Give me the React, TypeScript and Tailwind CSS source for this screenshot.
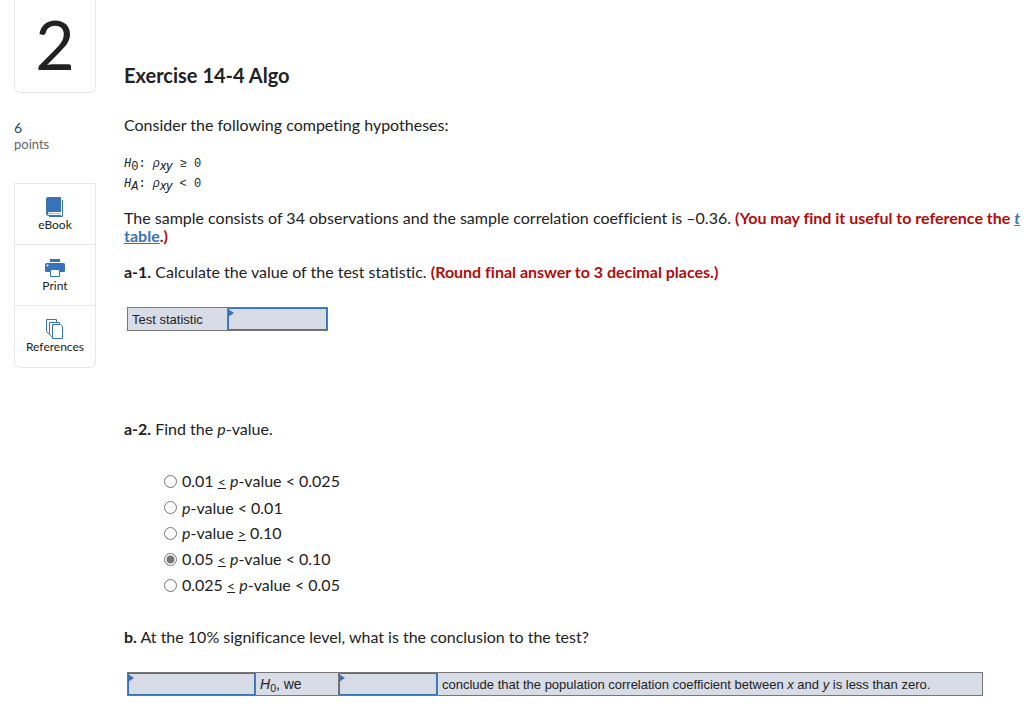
import { useState, type ReactNode } from 'react'

const choices: { id: string; label: ReactNode }[] = [
  { id: 'c1', label: <>0.01 <Rel s="<" /> <i>p</i>-value &lt; 0.025</> },
  { id: 'c2', label: <><i>p</i>-value &lt; 0.01</> },
  { id: 'c3', label: <><i>p</i>-value <Rel s=">" /> 0.10</> },
  { id: 'c4', label: <>0.05 <Rel s="<" /> <i>p</i>-value &lt; 0.10</> },
  { id: 'c5', label: <>0.025 <Rel s="<" /> <i>p</i>-value &lt; 0.05</> },
]

// Underlined < or >, read as "or equal"
function Rel({ s }: { s: string }) {
  return <span className="text-sm underline">{s}</span>
}

function BookIcon() {
  return (
    <svg width="20" height="20" viewBox="0 0 20 20" aria-hidden="true">
      <path d="M3 0h13v15H4.500a1.500 1.500 0 0 0 0 3H16v1H4a3 3 0 0 1-3-3V2a2 2 0 0 1 2-2z" fill="#3873ba" />
      <path d="M17.500 3v16.500H4" fill="none" stroke="#3873ba" />
      <path d="M3.500 15.500h12v2h-12z" fill="#fff" />
      <path d="M4 16.500h11" stroke="#9eb9dc" />
    </svg>
  )
}

function PrintIcon() {
  return (
    <svg width="20" height="20" viewBox="0 0 20 20" aria-hidden="true">
      <path d="M5 1h10v3H5zM1.500 5h17A1.500 1.500 0 0 1 20 6.500V13a1 1 0 0 1-1 1H1a1 1 0 0 1-1-1V6.500A1.500 1.500 0 0 1 1.500 5z" fill="#3873ba" />
      <path d="M5.500 11.500h9v7h-9z" fill="#fff" stroke="#3873ba" />
      <circle cx="2.500" cy="7.500" r="1" fill="#fff" />
    </svg>
  )
}

function ReferencesIcon() {
  return (
    <svg width="20" height="20" viewBox="0 0 20 20" aria-hidden="true">
      <g fill="#fff" stroke="#3873ba">
        <path d="M1.500.500h10v14h-8l-2-2z" />
        <path d="M4.500 3.500h10v14h-8l-2-2z" />
        <path d="M7.500 5.500h8l2 2v12h-10z" />
      </g>
    </svg>
  )
}

const tools = [
  { name: 'eBook', icon: <BookIcon /> },
  { name: 'Print', icon: <PrintIcon /> },
  { name: 'References', icon: <ReferencesIcon /> },
]

function Corner() {
  return (
    <svg className="pointer-events-none absolute top-0 left-0" width="6" height="9" viewBox="0 0 6 9" aria-hidden="true">
      <path d="M0 1l6 4-6 4z" fill="#3873ba" />
    </svg>
  )
}

function AnswerSelect({ label, options }: { label: string; options: string[] }) {
  return (
    <div className="relative">
      <select
        aria-label={label}
        defaultValue=""
        className="block h-[22px] w-full appearance-none border border-[#3873ba] bg-[#d8dce6] px-2 text-[13px]"
      >
        <option value=""></option>
        {options.map((o) => (
          <option key={o}>{o}</option>
        ))}
      </select>
      <Corner />
    </div>
  )
}

export default function App() {
  const [choice, setChoice] = useState('c4')

  return (
    <div className="flex min-h-screen items-start bg-white pl-3.5 font-[Lato,sans-serif] text-base leading-[18px] text-[#222] [font-variant-ligatures:none]">
      {/* Sidebar */}
      <aside className="w-[82px] shrink-0">
        <div className="flex h-[93px] items-center justify-center rounded-b-md border border-t-0 border-[#e8e8e8] pb-1 text-[68px]">
          2
        </div>
        <div className="mt-[27px] text-sm leading-4">
          <div className="text-[#1d4877]">6</div>
          <div className="text-[13px] text-[#666]">points</div>
        </div>
        <div className="mt-[31px] divide-y divide-[#e8e8e8] rounded-b-md border border-[#e8e8e8]">
          {tools.map((t) => (
            <button key={t.name} type="button" className="flex h-[61px] w-full flex-col items-center justify-center pt-px text-xs leading-4">
              {t.icon}
              {t.name}
            </button>
          ))}
        </div>
      </aside>

      {/* Question */}
      <main className="ml-7 min-w-0 flex-1 pt-[65px]">
        <h1 className="text-xl leading-5 font-bold">Exercise 14-4 Algo</h1>
        <p className="mt-[31px]">Consider the following competing hypotheses:</p>

        <div className="mt-5 font-['Liberation_Mono',monospace] text-xs leading-5">
          <div>
            <i>H</i><sub className="text-xs">0</sub>: <i>ρ</i><sub className="font-['Noto_Sans',sans-serif] text-[13px] italic">xy</sub> ≥ 0
          </div>
          <div>
            <i>H</i><sub className="text-xs italic">A</sub>: <i>ρ</i><sub className="font-['Noto_Sans',sans-serif] text-[13px] italic">xy</sub> &lt; 0
          </div>
        </div>

        <p className="mt-[15px]">
          The sample consists of 34 observations and the sample correlation coefficient is –0.36.{' '}
          <b className="text-[#b00c0c]">
            (You may find it useful to reference the{' '}
            <a href="#t-table" className="text-[#3873ba] underline"><i>t</i> table</a>.)
          </b>
        </p>

        <p className="mt-[18px]">
          <b>a-1.</b> Calculate the value of the test statistic.{' '}
          <b className="text-[#b00c0c]">(Round final answer to 3 decimal places.)</b>
        </p>

        <table className="mt-[26px] ml-[3px] border-collapse bg-[#d8dce6] font-['Liberation_Sans',sans-serif] text-[13px]">
          <tbody>
            <tr>
              <td className="w-[100px] border border-[#777] p-0 pt-0.5 pl-1">
                <label htmlFor="stat">Test statistic</label>
              </td>
              <td className="w-[100px] border border-[#777] p-0">
                <div className="relative">
                  <input id="stat" type="text" className="block h-[22px] w-full border border-[#3873ba] px-2" />
                  <Corner />
                </div>
              </td>
            </tr>
          </tbody>
        </table>

        <p className="mt-[89px]">
          <b>a-2.</b> Find the <i>p</i>-value.
        </p>

        <fieldset className="mt-[31px] ml-10">
          {choices.map((c) => (
            <label key={c.id} htmlFor={c.id} className="flex h-[26px] items-center gap-[5px]">
              <input
                id={c.id}
                type="radio"
                name="pvalue"
                checked={choice === c.id}
                onChange={() => setChoice(c.id)}
                className="mb-0.5 size-[13px] accent-[#767676]"
              />
              <span>{c.label}</span>
            </label>
          ))}
        </fieldset>

        <p className="mt-[29px]">
          <b>b.</b> At the 10% significance level, what is the conclusion to the test?
        </p>

        <table className="mt-[26px] ml-[3px] w-[calc(100%-52px)] table-fixed border-collapse bg-[#d8dce6] font-['Liberation_Sans',sans-serif] text-[13px]">
          <tbody>
            <tr>
              <td className="w-[128px] border border-[#777] p-0">
                <AnswerSelect label="Decision" options={['Reject', 'Do not reject']} />
              </td>
              <td className="w-[83px] border border-[#777] p-0 pl-1 text-sm leading-4">
                <i>H</i><sub>0</sub>, we
              </td>
              <td className="w-[99px] border border-[#777] p-0">
                <AnswerSelect label="Conclusion" options={['can', 'cannot']} />
              </td>
              <td className="border border-[#777] p-0 pt-0.5 pl-1 whitespace-nowrap">
                conclude that the population correlation coefficient between <i>x</i> and <i>y</i> is less than zero.
              </td>
            </tr>
          </tbody>
        </table>
      </main>
    </div>
  )
}
